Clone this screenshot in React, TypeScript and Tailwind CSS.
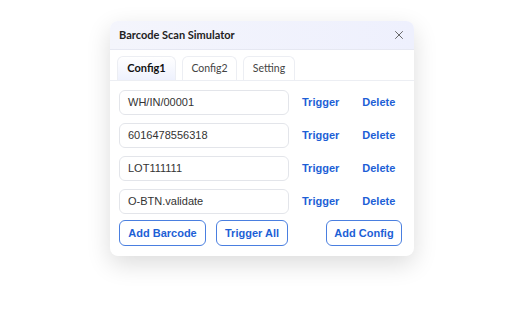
import { X } from "lucide-react";

const rows = ["WH/IN/00001", "6016478556318", "LOT111111", "O-BTN.validate"];

const tabs = [
  { label: "Config1", active: true, width: "w-[59px]" },
  { label: "Config2", active: false, width: "w-[55px]" },
  { label: "Setting", active: false, width: "w-[52px]" },
];

const App = () => {
  return (
    <div className="min-h-screen w-full bg-white pl-[110px] pt-[21px]">
      <div className="w-[304px] overflow-hidden rounded-lg bg-white shadow-[0_8px_24px_rgba(0,0,0,0.14)]">
        {/* Header */}
        <div className="flex h-[29px] items-center justify-between border-b border-[#e6e8f2] bg-gradient-to-r from-[#f4f5fc] to-[#eef0fd] pl-[9px] pr-[8px]">
          <span className="font-['Lato',sans-serif] text-[11px] font-bold text-[#222]">
            Barcode Scan Simulator
          </span>
          <X size={14} strokeWidth={1.5} className="text-[#555]" />
        </div>

        {/* Tabs */}
        <div className="flex gap-[6px] border-b border-[#eceef3] px-[7px] pt-[6px]">
          {tabs.map((t) => (
            <div
              key={t.label}
              className={`flex h-[24px] items-center justify-center rounded-t-md border border-b-0 border-[#eceef3] font-['Lato',sans-serif] ${t.width} ${
                t.active
                  ? "bg-gradient-to-b from-white to-[#eef1fd] text-[11px] font-bold text-[#111]"
                  : "bg-white text-[10.5px] text-[#444]"
              }`}
            >
              {t.label}
            </div>
          ))}
        </div>

        {/* Rows */}
        <div className="flex flex-col gap-[8px] px-[9px] pt-[9px] font-['Liberation_Sans',Arial,sans-serif]">
          {rows.map((r) => (
            <div key={r} className="flex items-center">
              <div className="flex h-[25px] w-[170px] items-center rounded-md border border-[#e3e5ea] px-[8px] text-[11px] text-[#333]">
                {r}
              </div>
              <span className="ml-[13px] text-[11px] font-bold text-[#1d5fd6]">Trigger</span>
              <span className="ml-[23px] text-[11px] font-bold text-[#1d5fd6]">Delete</span>
            </div>
          ))}

          {/* Actions */}
          <div className="-mt-[2px] flex items-center pb-[10px]">
            <button className="h-[26px] w-[87px] rounded-md border border-[#4a7fe0] text-[11px] font-bold text-[#1d5fd6]">
              Add Barcode
            </button>
            <button className="ml-[10px] h-[26px] w-[72px] rounded-md border border-[#4a7fe0] text-[11px] font-bold text-[#1d5fd6]">
              Trigger All
            </button>
            <button className="ml-[38px] h-[26px] w-[76px] rounded-md border border-[#4a7fe0] text-[11px] font-bold text-[#1d5fd6]">
              Add Config
            </button>
          </div>
        </div>
      </div>
    </div>
  );
};

export default App;
